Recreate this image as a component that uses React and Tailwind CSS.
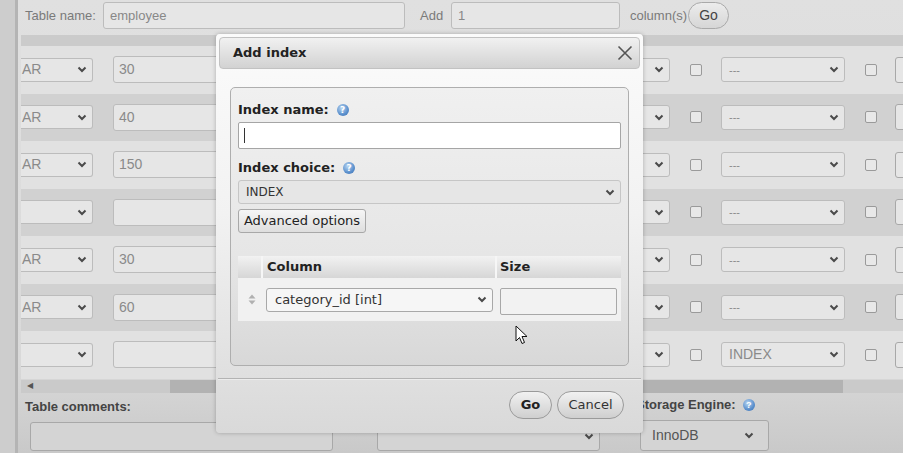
import React from 'react'

const Chevron = ({ className = '' }) => (
  <svg width="10" height="7" viewBox="0 0 10 7" className={className}>
    <polyline points="1.5,1.5 5,5 8.5,1.5" fill="none" stroke="#4a4a4a" strokeWidth="2" />
  </svg>
)

const Help = () => (
  <span className="inline-flex items-center justify-center w-[12px] h-[12px] rounded-full bg-[radial-gradient(circle_at_40%_35%,#b9d6f2,#5a8fcc_60%,#3d6fb0)] text-white text-[9px] font-bold leading-none">
    ?
  </span>
)

const rows = [
  { type: 'AR', len: '30', idx: '---' },
  { type: 'AR', len: '40', idx: '---' },
  { type: 'AR', len: '150', idx: '---' },
  { type: '', len: '', idx: '---' },
  { type: 'AR', len: '30', idx: '---' },
  { type: 'AR', len: '60', idx: '---' },
  { type: '', len: '', idx: 'INDEX' },
]

const Row = ({ r, dark }) => (
  <div className={`flex items-center h-[47.5px] overflow-hidden ${dark ? 'bg-[#d1d1d1]' : 'bg-[#e1e1e1]'}`}>
    <div className="shrink-0 flex items-center justify-between w-[72px] h-[24px] pl-[1px] pr-[5px] bg-[#e6e6e6] border border-l-0 border-[#bcbcbc] rounded-r-[3px] text-[14px] text-[#8a8a8a]">
      <span>{r.type}</span>
      <Chevron />
    </div>
    <div className="shrink-0 ml-[20px] w-[320px] h-[27px] pl-[5px] flex items-center bg-[#e6e6e6] border border-[#bcbcbc] rounded-[3px] text-[14px] text-[#8a8a8a]">
      {r.len}
    </div>
    <div className="shrink-0 ml-[127px] w-[110px] h-[24px] pr-[5px] flex items-center justify-end bg-[#e6e6e6] border border-[#bcbcbc] rounded-[3px]">
      <Chevron />
    </div>
    <div className="shrink-0 ml-[20px] w-[12px] h-[12px] border border-[#9a9a9a] rounded-[2px] bg-[#e8e8e8]" />
    <div className="shrink-0 ml-[19px] w-[124px] h-[25px] pl-[7px] pr-[5px] flex items-center justify-between bg-[#e6e6e6] border border-[#bcbcbc] rounded-[3px] text-[#8a8a8a]">
      <span className={r.idx === 'INDEX' ? 'text-[14px]' : 'text-[11px]'}>{r.idx}</span>
      <Chevron />
    </div>
    <div className="shrink-0 ml-[20px] w-[12px] h-[12px] border border-[#9a9a9a] rounded-[2px] bg-[#e8e8e8]" />
    <div className="shrink-0 ml-[18px] w-[20px] h-[26px] border border-[#a8a8a8] rounded-[3px] bg-[#e6e6e6]" />
  </div>
)

const Dialog = () => (
  <div className="absolute left-[216px] top-[34px] w-[427px] h-[399px] rounded-[4px] bg-[linear-gradient(#fbfbfb,#f2f2f2_45%,#d9d9d9)] shadow-[0_0_4px_rgba(0,0,0,0.25)] flex flex-col p-[3px] font-['DejaVu_Sans',sans-serif] text-[#222]">
    <div className="h-[32px] flex items-center justify-between pl-[13px] pr-[6px] rounded-[4px] border border-[#c2c2c2] bg-[linear-gradient(#f1f1f1,#d2d2d2)]">
      <span className="text-[13px] font-bold">Add index</span>
      <svg width="16" height="16" viewBox="0 0 16 16">
        <path d="M1.5 1.5 L14.5 14.5 M14.5 1.5 L1.5 14.5" stroke="#555" strokeWidth="1.6" />
      </svg>
    </div>
    <div className="mt-[18px] mx-[11px] h-[279px] rounded-[5px] border border-[#aeaeae] bg-[linear-gradient(#f0f0f0,#e6e6e6_60%,#d8d8d8)] px-[7px] pt-[14px] flex flex-col">
      <div className="flex items-center gap-[8px] h-[16px]">
        <span className="text-[13px] font-bold">Index name:</span>
        <Help />
      </div>
      <div className="mt-[4px] w-[383px] h-[27px] bg-white border border-[#a5a5a5] rounded-[2px] flex items-center pl-[5px]">
        <div className="w-[1px] h-[15px] bg-[#333]" />
      </div>
      <div className="mt-[11px] flex items-center gap-[8px] h-[16px]">
        <span className="text-[13px] font-bold">Index choice:</span>
        <Help />
      </div>
      <div className="mt-[4px] w-[383px] h-[24px] bg-[#e6e6e6] border border-[#c6c6c6] rounded-[3px] flex items-center justify-between pl-[7px] pr-[5px]">
        <span className="text-[12px] text-[#333]">INDEX</span>
        <Chevron />
      </div>
      <div className="mt-[5px] w-[128px] h-[24px] border border-[#a8a8a8] rounded-[3px] bg-[linear-gradient(#f6f6f6,#dedede)] flex items-center justify-center text-[13px] text-[#222]">
        Advanced options
      </div>
      <div className="mt-[23px] w-[383px] flex flex-col">
        <div className="flex h-[22px] bg-[linear-gradient(#f2f2f2,#d6d6d6)] text-[13px] font-bold">
          <div className="w-[25px] border-r-2 border-[#f6f6f6]" />
          <div className="w-[234px] pl-[4px] flex items-center border-r-2 border-[#f6f6f6]">Column</div>
          <div className="flex-1 pl-[3px] flex items-center">Size</div>
        </div>
        <div className="flex items-center h-[43px] bg-[#f1f1f1]">
          <div className="w-[28px] flex justify-center">
            <svg width="8" height="11" viewBox="0 0 8 11">
              <polygon points="4,0.5 7.5,4.5 0.5,4.5" fill="#b0b0b0" />
              <polygon points="0.5,6.5 7.5,6.5 4,10.5" fill="#b0b0b0" />
            </svg>
          </div>
          <div className="w-[227px] h-[24px] bg-[#f6f6f6] border border-[#a8a8a8] rounded-[3px] flex items-center justify-between pl-[8px] pr-[5px]">
            <span className="text-[13px] text-[#333]">category_id [int]</span>
            <Chevron />
          </div>
          <div className="ml-[7px] w-[117px] h-[27px] bg-[#f2f2f2] border border-[#a8a8a8] rounded-[2px] mt-[3px]" />
        </div>
      </div>
    </div>
    <div className="mt-[12px] h-[2px] border-t border-[#b3b3b3] border-b border-b-[#ececec] -mx-[1px]" />
    <div className="flex justify-end gap-[5px] pr-[16px] mt-[11px]">
      <div className="w-[43px] h-[28px] rounded-full border border-[#9a9a9a] bg-[linear-gradient(#f1f1f1,#cfcfcf)] flex items-center justify-center text-[13px] font-bold">
        Go
      </div>
      <div className="w-[67px] h-[28px] rounded-full border border-[#9a9a9a] bg-[linear-gradient(#f1f1f1,#cfcfcf)] flex items-center justify-center text-[13px] text-[#333]">
        Cancel
      </div>
    </div>
  </div>
)

export default function App() {
  return (
    <div className="relative w-[903px] h-[453px] overflow-hidden bg-[#d8d8d8] flex font-['Liberation_Sans',Arial,sans-serif]">
      <div className="w-[18px] bg-[#cdcdcd] border-r-[3px] border-[#b4b4b4] shrink-0" />
      <div className="flex-1 flex flex-col min-w-0 bg-[linear-gradient(#e0e0e0,#d9d9d9_80%,#c9c9c9)]">
        <div className="flex items-center h-[31px] pl-[7px] text-[13px] text-[#7a7a7a] shrink-0">
          <span className="w-[68px] whitespace-nowrap">Table name:</span>
          <div className="ml-[10px] w-[302px] h-[27px] pl-[6px] flex items-center bg-[#e6e6e6] border border-[#bcbcbc] rounded-[3px] text-[#888]">
            employee
          </div>
          <span className="ml-[15px] w-[23px]">Add</span>
          <div className="ml-[8px] w-[169px] h-[27px] pl-[6px] flex items-center bg-[#e6e6e6] border border-[#bcbcbc] rounded-[3px] text-[#888]">
            1
          </div>
          <span className="ml-[10px] w-[56px] whitespace-nowrap">column(s)</span>
          <div className="ml-[2px] w-[41px] h-[27px] rounded-full border border-[#a9a9a9] bg-[linear-gradient(#ececec,#d6d6d6)] flex items-center justify-center text-[14px] text-[#444]">
            Go
          </div>
        </div>
        <div className="ml-[3px] mt-[4px] flex flex-col shrink-0">
          <div className="h-[11px] bg-[#cbcbcb]" />
          {rows.map((r, i) => (
            <Row key={i} r={r} dark={i % 2 === 1} />
          ))}
          <div className="mt-[1px] h-[13px] flex items-center bg-[#cacaca] text-[#555]">
            <span className="ml-[6px] text-[8px]">◀</span>
            <div className="ml-[137px] w-[673px] h-[13px] bg-[#b2b2b2]" />
          </div>
        </div>
        <div className="flex pl-[7px] mt-[4px] shrink-0">
          <div className="flex flex-col w-[352px]">
            <span className="text-[13px] font-bold text-[#444] h-[17px]">Table comments:</span>
            <div className="mt-[8px] ml-[5px] w-[303px] h-[29px] bg-[#d4d4d4] border border-[#a8a8a8] rounded-[3px]" />
          </div>
          <div className="mt-[25px] w-[223px] h-[29px] bg-[#d4d4d4] border border-[#a8a8a8] rounded-[3px] flex items-center justify-end pr-[5px]">
            <Chevron />
          </div>
          <div className="ml-[36px] flex flex-col">
            <div className="flex items-center gap-[7px] h-[17px]">
              <span className="text-[13px] font-bold text-[#444]">Storage Engine:</span>
              <Help />
            </div>
            <div className="mt-[6px] ml-[4px] w-[129px] h-[31px] bg-[#d4d4d4] border border-[#a8a8a8] rounded-[3px] flex items-center justify-between pl-[11px] pr-[14px] text-[14px] text-[#555]">
              <span>InnoDB</span>
              <Chevron />
            </div>
          </div>
        </div>
      </div>
      <Dialog />
      <svg className="absolute left-[515px] top-[325px]" width="14" height="20" viewBox="0 0 14 20">
        <path d="M1 1 L1 16 L4.5 12.5 L7 18.5 L9.5 17.5 L7 11.5 L12 11.5 Z" fill="#fff" stroke="#111" strokeWidth="1" strokeLinejoin="round" />
      </svg>
    </div>
  )
}
